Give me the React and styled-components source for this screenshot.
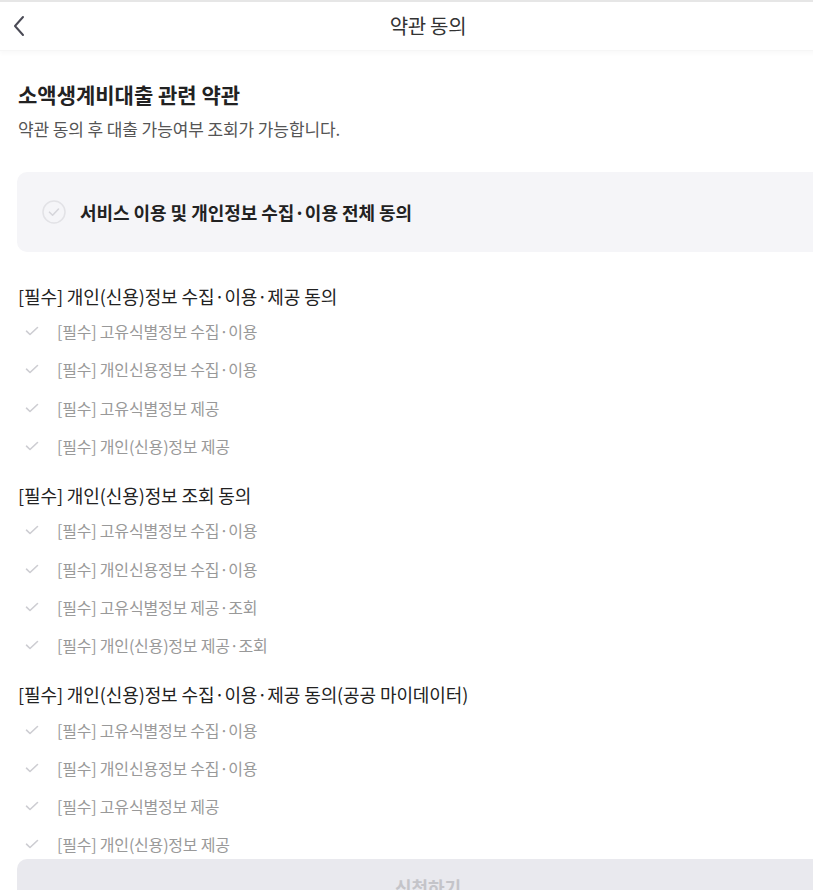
import React from "react";
import styled, { createGlobalStyle } from "styled-components";

const GlobalStyle = createGlobalStyle`
  html, body {
    margin: 0;
    padding: 0;
    background: #fff;
    overflow: hidden;
  }
  body {
    font-family: "Noto Sans CJK KR", "Noto Sans", sans-serif;
    color: #222;
  }
`;

const sections = [
  {
    title: "[필수] 개인(신용)정보 수집·이용·제공 동의",
    items: [
      "[필수] 고유식별정보 수집·이용",
      "[필수] 개인신용정보 수집·이용",
      "[필수] 고유식별정보 제공",
      "[필수] 개인(신용)정보 제공",
    ],
  },
  {
    title: "[필수] 개인(신용)정보 조회 동의",
    items: [
      "[필수] 고유식별정보 수집·이용",
      "[필수] 개인신용정보 수집·이용",
      "[필수] 고유식별정보 제공·조회",
      "[필수] 개인(신용)정보 제공·조회",
    ],
  },
  {
    title: "[필수] 개인(신용)정보 수집·이용·제공 동의(공공 마이데이터)",
    items: [
      "[필수] 고유식별정보 수집·이용",
      "[필수] 개인신용정보 수집·이용",
      "[필수] 고유식별정보 제공",
      "[필수] 개인(신용)정보 제공",
    ],
  },
];

const App = () => {
  return (
    <>
      <GlobalStyle />
      <Page>
        <Header>
          <BackButton aria-label="뒤로">
            <svg width="14" height="22" viewBox="0 0 14 22" fill="none">
              <path
                d="M11 2L3 11L11 20"
                stroke="#4a4a55"
                strokeWidth="2"
                strokeLinecap="round"
                strokeLinejoin="round"
              />
            </svg>
          </BackButton>
          <HeaderTitle>약관 동의</HeaderTitle>
        </Header>
        <Content>
          <Heading>소액생계비대출 관련 약관</Heading>
          <SubText>약관 동의 후 대출 가능여부 조회가 가능합니다.</SubText>
          <AllAgreeCard>
            <CircleCheck width="24" height="24" viewBox="0 0 24 24" fill="none">
              <circle cx="12" cy="12" r="11" stroke="#e2e2e6" strokeWidth="1.5" />
              <path
                d="M7.5 12.2L10.6 15.2L16.5 9"
                stroke="#d6d6db"
                strokeWidth="1.6"
                strokeLinecap="round"
                strokeLinejoin="round"
              />
            </CircleCheck>
            <AllAgreeText>서비스 이용 및 개인정보 수집·이용 전체 동의</AllAgreeText>
          </AllAgreeCard>
          {sections.map((section, i) => (
            <Section key={i}>
              <SectionTitle>{section.title}</SectionTitle>
              <ItemList>
                {section.items.map((item, j) => (
                  <Item key={j}>
                    <svg width="14" height="12" viewBox="0 0 14 12" fill="none">
                      <path
                        d="M1.5 6.2L5 9.5L12.5 2.5"
                        stroke="#cdcdd2"
                        strokeWidth="1.6"
                        strokeLinecap="round"
                        strokeLinejoin="round"
                      />
                    </svg>
                    <ItemText>{item}</ItemText>
                  </Item>
                ))}
              </ItemList>
            </Section>
          ))}
        </Content>
        <SubmitButton disabled>신청하기</SubmitButton>
      </Page>
    </>
  );
};

const Page = styled.div`
  width: 856px;
  border-top: 2px solid #e6e6e6;
`;

const Header = styled.header`
  position: relative;
  height: 48px;
  display: flex;
  align-items: center;
  justify-content: center;
  box-shadow: 0 3px 4px rgba(0, 0, 0, 0.025);
  border-bottom: 1px solid #f6f6f6;
`;

const BackButton = styled.button`
  position: absolute;
  left: 7px;
  top: 11px;
  width: 24px;
  height: 26px;
  padding: 0;
  border: none;
  background: none;
  display: flex;
  align-items: center;
  justify-content: center;
`;

const HeaderTitle = styled.h1`
  margin: -2px 0 0;
  font-size: 20px;
  font-weight: 400;
  color: #333;
  letter-spacing: -0.3px;
`;

const Content = styled.main`
  padding: 29px 17px 0;
`;

const Heading = styled.h2`
  margin: 0 0 0 1px;
  font-size: 21px;
  font-weight: 700;
  color: #222;
  line-height: 28px;
`;

const SubText = styled.p`
  margin: 10px 0 0 1px;
  font-size: 17px;
  color: #555;
  line-height: 22px;
  letter-spacing: -0.1px;
`;

const AllAgreeCard = styled.div`
  margin-top: 32px;
  height: 80px;
  border-radius: 10px;
  background: #f5f5f8;
  display: flex;
  align-items: center;
  padding-left: 25px;
  gap: 14px;
`;

const CircleCheck = styled.svg`
  flex: none;
`;

const AllAgreeText = styled.span`
  font-size: 18px;
  font-weight: 700;
  color: #222;
  letter-spacing: -0.05px;
`;

const Section = styled.section`
  margin-top: 32px;
  & + & {
    margin-top: 18px;
  }
`;

const SectionTitle = styled.h3`
  margin: 0 0 0 1px;
  font-size: 18px;
  font-weight: 400;
  color: #222;
  line-height: 24px;
  letter-spacing: -0.1px;
`;

const ItemList = styled.ul`
  list-style: none;
  margin: 4px 0 0;
  padding: 0;
`;

const Item = styled.li`
  height: 38.3px;
  display: flex;
  align-items: center;
  padding-left: 8px;
  gap: 18px;
`;

const ItemText = styled.span`
  font-size: 16px;
  color: #999;
  letter-spacing: -0.2px;
`;

const SubmitButton = styled.button`
  position: fixed;
  top: 859px;
  left: 17px;
  width: 822px;
  height: 56px;
  border: none;
  border-radius: 10px;
  background: #e9e9ee;
  color: #c4c4c9;
  font-family: inherit;
  font-size: 18px;
  font-weight: 700;
`;

export default App;
